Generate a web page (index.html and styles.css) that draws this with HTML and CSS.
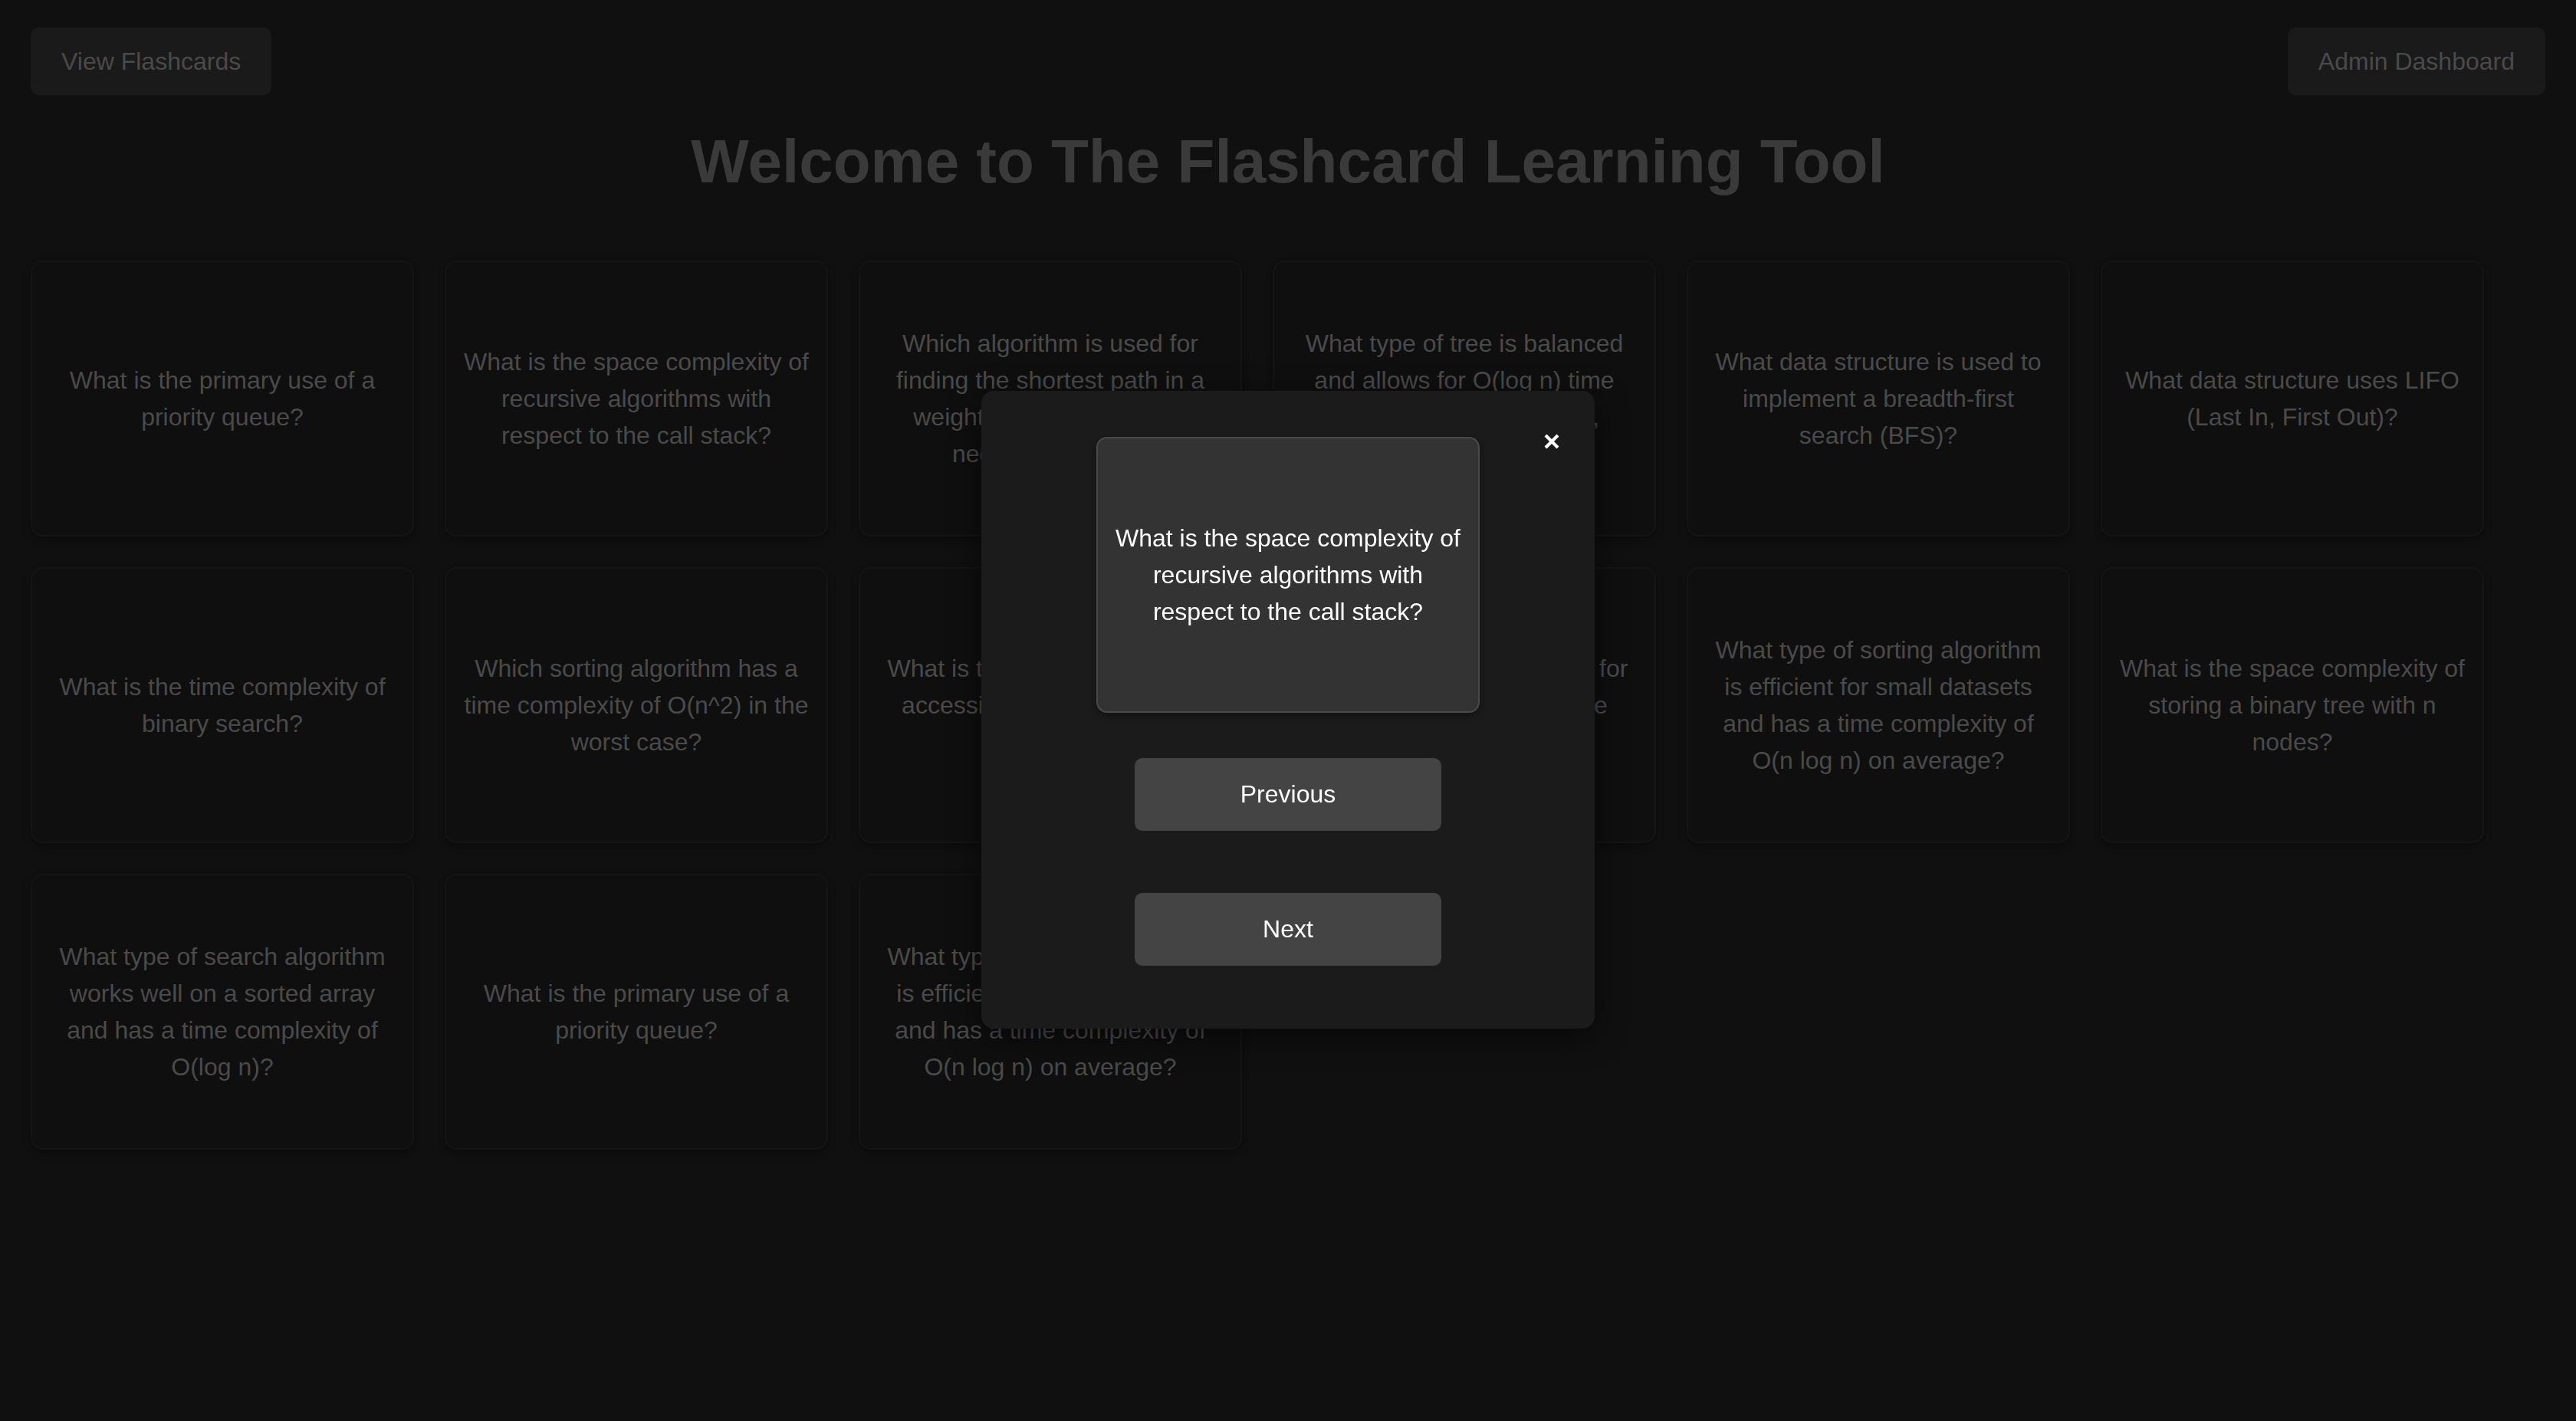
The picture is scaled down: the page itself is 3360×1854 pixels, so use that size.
FILE: index.html
```html
<!DOCTYPE html>
<html lang="en">
<head>
<meta charset="utf-8">
<title>Flashcard Learning Tool</title>
<link rel="stylesheet" href="styles.css">
</head>
<body>
<div class="page">
  <header class="topbar">
    <button class="nav-btn">View Flashcards</button>
    <button class="nav-btn">Admin Dashboard</button>
  </header>
  <h1 class="title">Welcome to The Flashcard Learning Tool</h1>
  <section class="grid">
    <div class="card">What is the primary use of a priority queue?</div>
    <div class="card">What is the space complexity of recursive algorithms with respect to the call stack?</div>
    <div class="card">Which algorithm is used for finding the shortest path in a weighted graph with non-negative weights?</div>
    <div class="card">What type of tree is balanced and allows for O(log n) time complexity for insertions, deletions, and lookups?</div>
    <div class="card">What data structure is used to implement a breadth-first search (BFS)?</div>
    <div class="card">What data structure uses LIFO (Last In, First Out)?</div>
    <div class="card">What is the time complexity of binary search?</div>
    <div class="card">Which sorting algorithm has a time complexity of O(n^2) in the worst case?</div>
    <div class="card">What is the time complexity of accessing an element in an array?</div>
    <div class="card">What data structure is best for implementing a hash table efficiently?</div>
    <div class="card">What type of sorting algorithm is efficient for small datasets and has a time complexity of O(n log n) on average?</div>
    <div class="card">What is the space complexity of storing a binary tree with n nodes?</div>
    <div class="card">What type of search algorithm works well on a sorted array and has a time complexity of O(log n)?</div>
    <div class="card">What is the primary use of a priority queue?</div>
    <div class="card">What type of sorting algorithm is efficient for small datasets and has a time complexity of O(n log n) on average?</div>
  </section>
</div>

<div class="backdrop">
  <div class="modal">
    <button class="close" aria-label="Close">
      <svg width="20" height="20" viewBox="0 0 20 20"><path d="M2 2 L18 18 M18 2 L2 18" stroke="#ffffff" stroke-width="4.2" fill="none"/></svg>
    </button>
    <div class="modal-card">What is the space complexity of recursive algorithms with respect to the call stack?</div>
    <button class="modal-btn prev">Previous</button>
    <button class="modal-btn next">Next</button>
  </div>
</div>
</body>
</html>
```
FILE: styles.css
```css
* { box-sizing: border-box; }

html, body {
  margin: 0;
  padding: 0;
  background: #101010;
  font-family: "Liberation Sans", Arial, sans-serif;
}

.page {
  padding: 36px 40px 0;
  min-height: 1854px;
}

.topbar {
  display: flex;
  justify-content: space-between;
  align-items: center;
}

.nav-btn {
  height: 88px;
  padding: 0 40px;
  border: none;
  border-radius: 10px;
  background: #1a1a1a;
  color: #4a4a4a;
  font-family: inherit;
  font-size: 32px;
  line-height: 88px;
}

.title {
  margin: 41px 0 83px;
  text-align: center;
  font-size: 80px;
  line-height: 92px;
  font-weight: 700;
  color: #3a3a3a;
}

.grid {
  display: flex;
  flex-wrap: wrap;
  gap: 40px;
}

.card {
  width: 500px;
  height: 360px;
  padding: 0 20px;
  border: 2px solid #151515;
  border-radius: 16px;
  background: #0f0f0f;
  box-shadow: 0 4px 10px rgba(0, 0, 0, 0.35);
  display: flex;
  align-items: center;
  justify-content: center;
  text-align: center;
  font-size: 32px;
  line-height: 48px;
  color: #4a4a4a;
}

.backdrop {
  position: fixed;
  inset: 0;
  display: flex;
  align-items: center;
  justify-content: center;
}

.modal {
  position: relative;
  width: 800px;
  height: 832px;
  padding: 60px 0 0;
  margin-top: -2px;
  background: #1b1b1b;
  border-radius: 16px;
  box-shadow: 0 10px 40px rgba(0, 0, 0, 0.55);
  display: flex;
  flex-direction: column;
  align-items: center;
}

.close {
  position: absolute;
  top: 56px;
  right: 46px;
  width: 20px;
  height: 20px;
  padding: 0;
  border: none;
  background: transparent;
  display: flex;
}

.modal-card {
  width: 500px;
  height: 360px;
  padding: 0 20px;
  border: 2px solid #4a4a4a;
  border-radius: 14px;
  background: #333333;
  box-shadow: 0 4px 10px rgba(0, 0, 0, 0.35);
  display: flex;
  align-items: center;
  justify-content: center;
  text-align: center;
  font-size: 32px;
  line-height: 48px;
  color: #ffffff;
}

.modal-btn {
  width: 400px;
  height: 95px;
  border: none;
  border-radius: 10px;
  background: #444444;
  color: #ffffff;
  font-family: inherit;
  font-size: 32px;
}

.prev { margin-top: 59px; }
.next { margin-top: 81px; }
```
